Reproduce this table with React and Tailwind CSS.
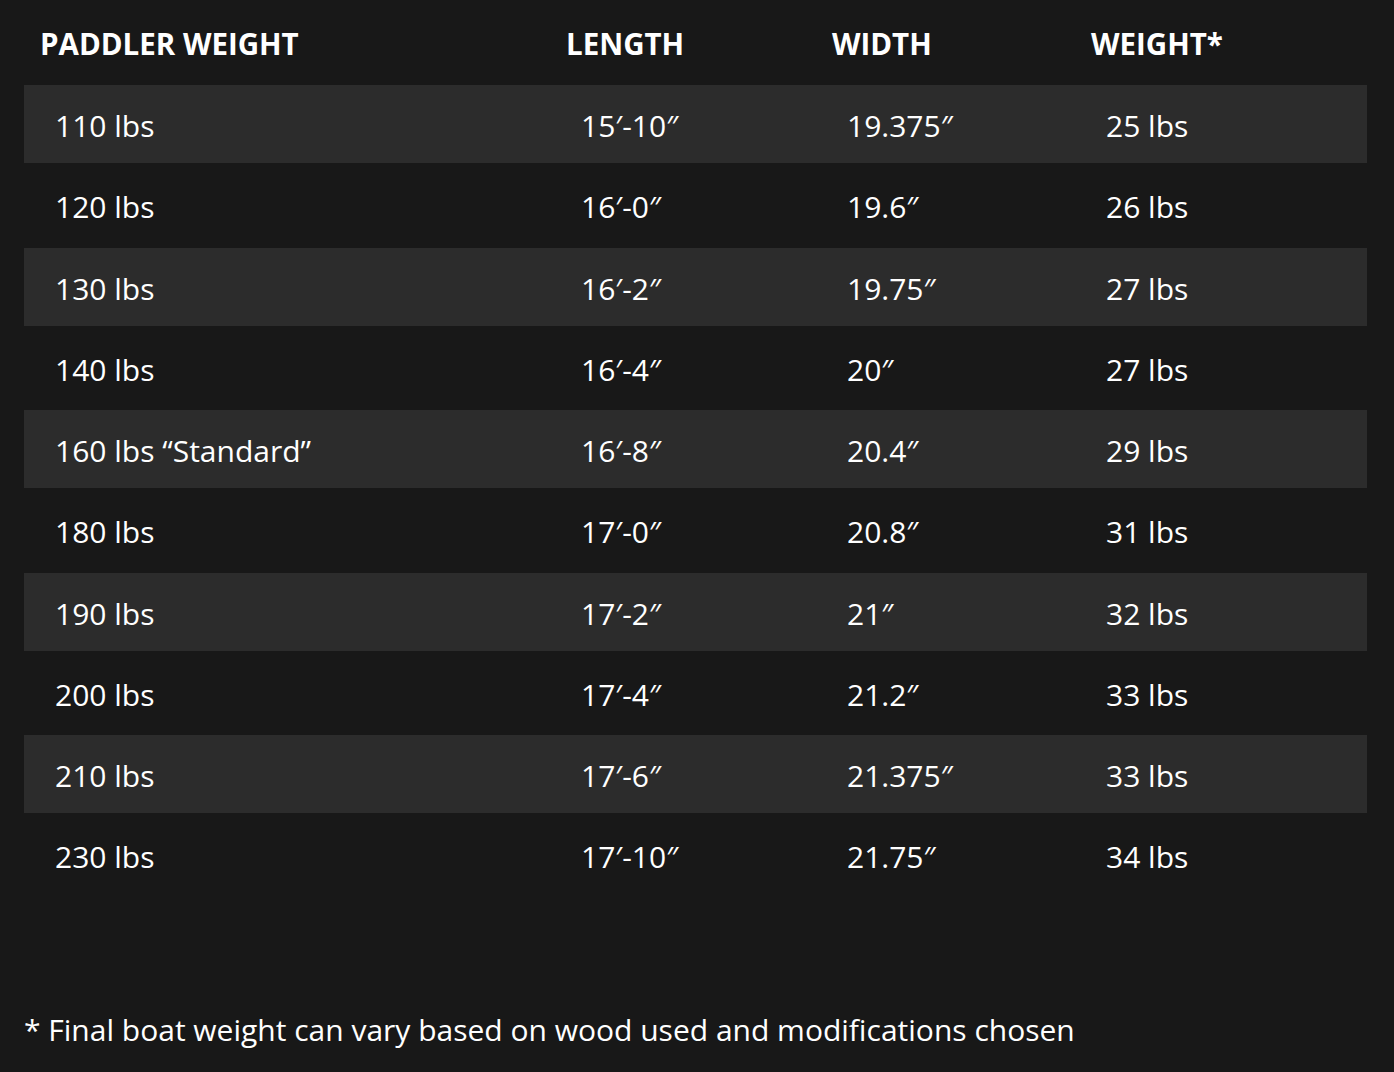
import React from "react";

const rows = [
  ["110 lbs", "15′-10″", "19.375″", "25 lbs"],
  ["120 lbs", "16′-0″", "19.6″", "26 lbs"],
  ["130 lbs", "16′-2″", "19.75″", "27 lbs"],
  ["140 lbs", "16′-4″", "20″", "27 lbs"],
  ["160 lbs “Standard”", "16′-8″", "20.4″", "29 lbs"],
  ["180 lbs", "17′-0″", "20.8″", "31 lbs"],
  ["190 lbs", "17′-2″", "21″", "32 lbs"],
  ["200 lbs", "17′-4″", "21.2″", "33 lbs"],
  ["210 lbs", "17′-6″", "21.375″", "33 lbs"],
  ["230 lbs", "17′-10″", "21.75″", "34 lbs"],
];

const cols = ["w-[526px]", "w-[266px]", "w-[259px]", "flex-1"];

export default function App() {
  return (
    <div
      className="w-full min-h-[1072px] bg-[#181818] text-white px-[24px]"
      style={{ fontFamily: '"Open Sans", "Noto Sans", sans-serif' }}
    >
      <div className="w-[1343px]">
        <div className="flex h-[85px] items-center text-[29.5px] font-bold uppercase leading-none pt-[3px]">
          {["Paddler Weight", "Length", "Width", "Weight*"].map((h, i) => (
            <div key={h} className={`${cols[i]} pl-[16px]`}>
              {h}
            </div>
          ))}
        </div>
        <div className="flex flex-col gap-[3px]">
          {rows.map((r, ri) => (
            <div
              key={ri}
              className={`flex h-[78.25px] items-center text-[30px] leading-none pt-[4px] ${
                ri % 2 === 0 ? "bg-[#2c2c2c]" : ""
              }`}
            >
              {r.map((c, ci) => (
                <div key={ci} className={`${cols[ci]} pl-[31px]`}>
                  {c}
                </div>
              ))}
            </div>
          ))}
        </div>
      </div>
      <div className="mt-[114px] text-[30px] leading-[42px]">
        * Final boat weight can vary based on wood used and modifications chosen
      </div>
    </div>
  );
}
